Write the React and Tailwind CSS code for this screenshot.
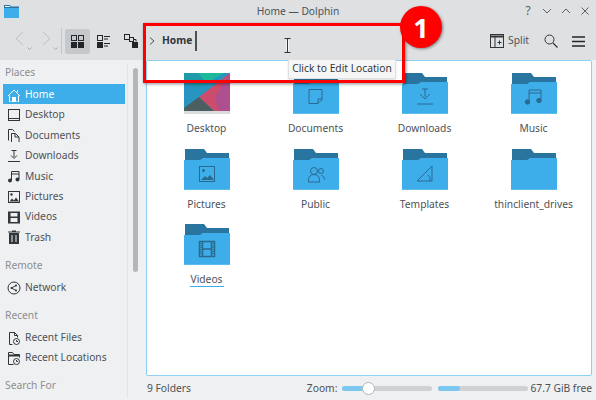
import React from "react";

const Ico = ({ size = 14, className = "", children, box }) => (
  <svg width={size} height={size} viewBox={box || `0 0 ${size} ${size}`} fill="none" stroke="currentColor" strokeWidth="1" className={`shrink-0 ${className}`}>
    {children}
  </svg>
);

const placeIcons = {
  home: <><path d="M1 8 7 2l6 6" /><path d="M2.500 7.500V14h9V7.500" /><rect x="5" y="9" width="4" height="5" fill="currentColor" stroke="none" /><path d="M10.500 2v2.500" /></>,
  desktop: <><rect x="1.500" y="1.500" width="11" height="11" /><path d="M2 10.500h10" /></>,
  documents: <><path d="M1.500 12.500v-11h4l2 2" /><path d="M4.500 14.500v-9h4l3.500 3.500v5.500z" /><path d="M8 5.500V9h4" /></>,
  downloads: <><path d="M7 1v7M4 6.500l3 3 3-3M1 12.500h12" /><path d="M4.500 1.500H7h2.500" /></>,
  music: <><path d="M4.500 11V2.500h7.500V10M4.500 5H12" /><circle cx="3" cy="11.500" r="2" fill="currentColor" stroke="none" /><circle cx="10.500" cy="10.500" r="2" fill="currentColor" stroke="none" /></>,
  pictures: <><rect x="1.500" y="1.500" width="11" height="11" /><circle cx="4.500" cy="4.500" r="1.200" fill="currentColor" stroke="none" /><path d="M2.500 11.500 5 8.500l2 2 2-3 3 4z" fill="currentColor" stroke="none" /></>,
  videos: <><rect x="1" y="1.500" width="12" height="12" stroke="none" fill="currentColor" /><rect x="3.500" y="3" width="7" height="3.500" fill="#eff0f1" stroke="none" /><rect x="3.500" y="8" width="7" height="4" fill="#eff0f1" stroke="none" /></>,
  trash: <><path d="M2 3h10v11H2z" fill="currentColor" stroke="none" /><path d="M1 2h12M5 1h4" strokeWidth="1.200" /><path d="M5 5v7M9 5v7" stroke="#eff0f1" /></>,
  network: <><circle cx="7" cy="7" r="6" /><circle cx="4.500" cy="7" r="1" fill="currentColor" stroke="none" /><circle cx="9" cy="4.500" r="1" fill="currentColor" stroke="none" /><circle cx="9" cy="9.500" r="1" fill="currentColor" stroke="none" /><path d="M9 4.500 4.500 7 9 9.500" /></>,
  recentFiles: <><path d="M5.500 13.500h-3v-12h5l3 3v2" /><path d="M7.500 1.500v3h3" /><circle cx="9.500" cy="10.500" r="3" /><path d="M9.500 9v1.500h1.500" /></>,
  recentLocations: <><path d="M1.500 13.500v-12h4l1.500 2h5.500v3" /><path d="M1.500 4.500h11" strokeWidth="2" /><path d="M1.500 13.500h5" /><circle cx="9.500" cy="10.500" r="3" /><path d="M9.500 9v1.500h1.500" /></>,
};

const FolderIcon = ({ children }) => (
  <svg width="46" height="41" viewBox="0 0 46 41" className="block">
    <path d="M1 0h19l3 4h22v8H1z" fill="#2a759f" />
    <path d="M0 11h16l3-2h27v32H0z" fill="#3daee9" />
    <rect x="0" y="40" width="46" height="1" fill="#5dbdee" />
    <g fill="none" stroke="#2a6a90" strokeWidth="1">{children}</g>
  </svg>
);

const DesktopThumb = () => (
  <svg width="46" height="41" viewBox="0 0 46 41" className="block">
    <rect width="46" height="41" fill="#2795c0" />
    <path d="M0 0h40L16 14 0 10z" fill="#1f9aa8" />
    <path d="M14 0h26L23 10z" fill="#1cb89a" />
    <path d="M46 0v38H30L15 24z" fill="#cc4c6c" />
    <path d="M46 0v38H35L31 24z" fill="#ae4f90" />
    <path d="M0 35l15-11 15 14H0z" fill="#4b5f60" />
    <rect y="38" width="46" height="3" fill="#d8dcdd" />
  </svg>
);

const folders = [
  { name: "Desktop", thumb: true },
  { name: "Documents", glyph: <><path d="M16 16.500h13v10l-4 4h-9z" /><path d="M25 30v-4h4" /></> },
  { name: "Downloads", glyph: <><path d="M20 16h6M23 16v8M18 21l5 5 5-5" /><path d="M15 31h16" /></> },
  { name: "Music", glyph: <><path d="M18 28V17h12v10M18 20h12" /><circle cx="16.500" cy="29" r="2.200" fill="#2a6a90" /><circle cx="28" cy="27.500" r="2.200" fill="#2a6a90" /></> },
  { name: "Pictures", glyph: <><rect x="15.500" y="17.500" width="15" height="15" /><circle cx="19.500" cy="21.500" r="1.500" fill="#2a6a90" stroke="none" /><path d="M17 31l4-4 2 2 3-3 4 5z" fill="#2a6a90" stroke="none" /></> },
  { name: "Public", glyph: <><circle cx="21" cy="22" r="3.500" /><path d="M15.500 33v-2.500a5.500 5 0 0 1 11 0V33z" /><circle cx="28" cy="22" r="2.500" /><path d="M28.500 26.500c2 .5 3 2 3 4" /></> },
  { name: "Templates", glyph: <><path d="M15 32 30 17v15z" /><path d="M26 26a6 6 0 0 1 2 6" /></> },
  { name: "thinclient_drives" },
  { name: "Videos", underline: true, glyph: <><rect x="15.500" y="17.500" width="15" height="15" strokeWidth="1.500" /><path d="M18.500 17v16M27.500 17v16M18.500 25h9" strokeWidth="1.500" /><path d="M17 19v12M29 19v12" strokeWidth="1.500" strokeDasharray="1 1" /></> },
];

const SectionLabel = ({ children, className = "" }) => (
  <div className={`pl-[5px] text-[10.250px] leading-[14px] text-[#8b8f92] ${className}`}>{children}</div>
);

const Place = ({ icon, label, active }) => (
  <div className={`ml-[3px] flex h-[20.400px] w-[122px] items-center gap-[4px] pl-[4px] pt-[1px] ${active ? "bg-[#3daee9] text-white" : "text-[#31363b]"}`}>
    <Ico size={14}>{placeIcons[icon]}</Ico>
    <span className={`text-[10.250px] ${active ? "text-white" : "text-[#4d5257]"}`}>{label}</span>
  </div>
);

export default function App() {
  return (
    <div className="relative flex h-[400px] w-[596px] flex-col overflow-hidden bg-[#eff0f1] font-['Noto_Sans',sans-serif] text-[#31363b]">
      {/* title bar */}
      <div className="flex h-[22px] items-center bg-[#dee0e2] pl-[4px] pr-[4px]">
        <div className="flex w-[71px]">
          <svg width="15" height="14" viewBox="0 0 15 14" className="shrink-0">
            <path d="M0 1h6l1 1.500h8V14H0z" fill="#2a759f" />
            <path d="M0 4h15v10H0z" fill="#3daee9" />
            <path d="M1 2h5v1H1z" fill="#fff" />
          </svg>
        </div>
        <div className="flex-1 pt-[1px] text-center text-[10.250px] text-[#4d5257]">Home — Dolphin</div>
        <div className="flex w-[71px] items-center gap-[5px] text-[#5c6165]">
          <span className="flex w-[14px] justify-center text-[12px] leading-none">?</span>
          <Ico size={14}><path d="M3 5l4 4 4-4" /></Ico>
          <Ico size={14}><path d="M3 9l4-4 4 4" /></Ico>
          <Ico size={14}><path d="M3.500 3.500l7 7M10.500 3.500l-7 7" /></Ico>
        </div>
      </div>

      {/* toolbar */}
      <div className="flex h-[38px] items-center bg-[#dee0e2] pl-[13px] pr-[11px]">
        <div className="relative flex w-[26px] text-[#bcbfc2]">
          <Ico size={14} box="0 0 14 14"><path d="M10 1 3 7.500l7 6.500" /></Ico>
          <Ico size={5} box="0 0 5 5" className="mt-[15px] text-[#a9acaf]"><path d="M.5 1.500 2.500 3.500l2-2" /></Ico>
        </div>
        <div className="flex w-[22px] text-[#bcbfc2]">
          <Ico size={14} box="0 0 14 14"><path d="M4 1l7 6.500L4 14" /></Ico>
          <Ico size={5} box="0 0 5 5" className="mt-[15px] text-[#a9acaf]"><path d="M.5 1.500 2.500 3.500l2-2" /></Ico>
        </div>
        <div className="h-[26px] w-px bg-[#c4c7ca]" />
        <div className="ml-[3px] flex h-[25px] w-[25px] items-center justify-center rounded-[2px] bg-[#c6c9cc]">
          <Ico size={13} className="text-[#232629]">
            <rect x=".5" y=".5" width="5" height="5" /><rect x="7.500" y=".5" width="5" height="5" />
            <rect x="0" y="7" width="6" height="6" fill="currentColor" stroke="none" /><rect x="7" y="7" width="6" height="6" fill="currentColor" stroke="none" />
          </Ico>
        </div>
        <div className="ml-[7px] flex w-[13px]">
          <Ico size={13} className="text-[#232629]">
            <rect x=".5" y=".5" width="5" height="5" /><path d="M7 1.500h6M7 4h4" />
            <rect x="0" y="7" width="6" height="6" fill="currentColor" stroke="none" /><path d="M7 8.500h6M7 11h4" />
          </Ico>
        </div>
        <div className="ml-[14px] flex w-[14px]">
          <Ico size={14} className="text-[#232629]">
            <rect x=".5" y=".5" width="5" height="5" /><rect x="5.500" y="3.500" width="4" height="4" /><path d="M9.500 5.500H12v2" />
            <rect x="8" y="8" width="6" height="6" fill="currentColor" stroke="none" />
          </Ico>
        </div>
        {/* breadcrumb */}
        <Ico size={8} box="0 0 8 8" className="ml-[10px] text-[#4d5257]"><path d="M2 .5 6 4 2 7.500" /></Ico>
        <span className="ml-[6px] text-[10.250px] font-bold text-[#31363b]">Home</span>
        <div className="ml-[3px] h-[20px] w-[2px] bg-[#4d5257]" />
        <div className="flex-1" />
        <Ico size={14} className="text-[#31363b]">
          <rect x=".5" y=".5" width="13" height="13" /><path d="M0 2.500h14" strokeWidth="2" /><path d="M5 3v11" /><path d="M7.500 8.500h4M9.500 6.500v4" />
        </Ico>
        <span className="ml-[4px] text-[10.250px] text-[#4d5257]">Split</span>
        <Ico size={14} className="ml-[15px] text-[#31363b]"><circle cx="5.500" cy="5.500" r="4.500" /><path d="M9 9l4.500 4.500" strokeWidth="1.200" /></Ico>
        <svg width="13" height="11" viewBox="0 0 13 11" className="ml-[14px] shrink-0 text-[#232629]">
          <path d="M0 1h13M0 5.500h13M0 10h13" stroke="currentColor" strokeWidth="1.700" />
        </svg>
      </div>

      {/* body */}
      <div className="flex min-h-0 flex-1">
        {/* places panel */}
        <div className="flex w-[127px] flex-col overflow-hidden pt-[5px]">
          <SectionLabel className="mb-[5px]">Places</SectionLabel>
          <Place icon="home" label="Home" active />
          <Place icon="desktop" label="Desktop" />
          <Place icon="documents" label="Documents" />
          <Place icon="downloads" label="Downloads" />
          <Place icon="music" label="Music" />
          <Place icon="pictures" label="Pictures" />
          <Place icon="videos" label="Videos" />
          <Place icon="trash" label="Trash" />
          <SectionLabel className="mt-[11px] mb-[5px]">Remote</SectionLabel>
          <Place icon="network" label="Network" />
          <SectionLabel className="mt-[10.500px] mb-[5px]">Recent</SectionLabel>
          <Place icon="recentFiles" label="Recent Files" />
          <Place icon="recentLocations" label="Recent Locations" />
          <SectionLabel className="mt-[10px]">Search For</SectionLabel>
        </div>
        {/* scrollbar */}
        <div className="flex w-[19px] shrink-0 justify-between pr-[4px]">
          <div className="mb-[2px] mt-[3px] w-[1px] bg-[#e3e4e6]" />
          <div className="mr-[4px] mt-[8px] h-[204px] w-[5px] rounded-[3px] bg-[#b4b7ba]" />
        </div>
        {/* folder view + status bar */}
        <div className="flex min-w-0 flex-1 flex-col pr-[4px]">
          <div className="min-h-0 flex-1 rounded-[2px] border border-[#8fd0f2] bg-white pl-[5px] pt-[12px]">
            <div className="grid grid-cols-[repeat(4,109px)] auto-rows-[75.500px]">
              {folders.map((f) => (
                <div key={f.name} className="flex flex-col items-center">
                  {f.thumb ? <DesktopThumb /> : <FolderIcon>{f.glyph}</FolderIcon>}
                  <span className={`mt-[7px] text-[10.250px] leading-[14px] text-[#4d5257] ${f.underline ? "border-b border-[#3daee9] px-[1px]" : ""}`}>
                    {f.name}
                  </span>
                </div>
              ))}
            </div>
          </div>
          <div className="flex h-[24px] shrink-0 items-center pt-[1px] text-[10.250px] text-[#4d5257]">
            <span className="ml-[1px]">9 Folders</span>
            <span className="ml-auto">Zoom:</span>
            <div className="relative ml-[5px] h-[5px] w-[90px] rounded-full bg-[#cfd1d3]">
              <div className="h-full w-[26px] rounded-full bg-[#7cc7ef]" />
              <div className="absolute left-[20px] top-[-4px] h-[13px] w-[13px] rounded-full border border-[#b3b6b9] bg-white" />
            </div>
            <div className="ml-[6px] h-[5px] w-[90px] rounded-full bg-[#cfd1d3]">
              <div className="h-full w-[22px] rounded-full bg-[#7cc7ef]" />
            </div>
            <span className="ml-[2px] whitespace-nowrap">67.7 GiB free</span>
          </div>
        </div>
      </div>

      {/* I-beam mouse cursor */}
      <svg width="7" height="15" viewBox="0 0 7 15" className="absolute left-[284px] top-[38px] text-[#31363b]">
        <path d="M.5.5h6M.5 14.500h6M3.500 1v13" stroke="currentColor" fill="none" />
        <path d="M2.500 2v11M4.500 2v11" stroke="#ffffff" strokeOpacity=".7" />
      </svg>

      {/* tooltip */}
      <div className="absolute left-[288px] top-[59px] flex h-[20px] w-[108px] items-center justify-center rounded-[2px] border border-[#e0e1e3] bg-[#f6f6f7] text-[10.250px] text-[#31363b] shadow-[0_1px_2px_rgba(0,0,0,0.15)]">
        Click to Edit Location
      </div>

      {/* red annotation */}
      <div className="absolute left-[143px] top-[23px] h-[60px] w-[262px] border-[3px] border-[#ff0000] shadow-[1px_1px_3px_rgba(0,0,0,0.45)]" />
      <div className="absolute left-[400px] top-[6px] flex h-[42px] w-[42px] items-center justify-center rounded-full bg-[#ff0000] text-[27px] font-bold leading-none text-white shadow-[1px_1px_3px_rgba(0,0,0,0.45)]">
        1
      </div>
    </div>
  );
}
